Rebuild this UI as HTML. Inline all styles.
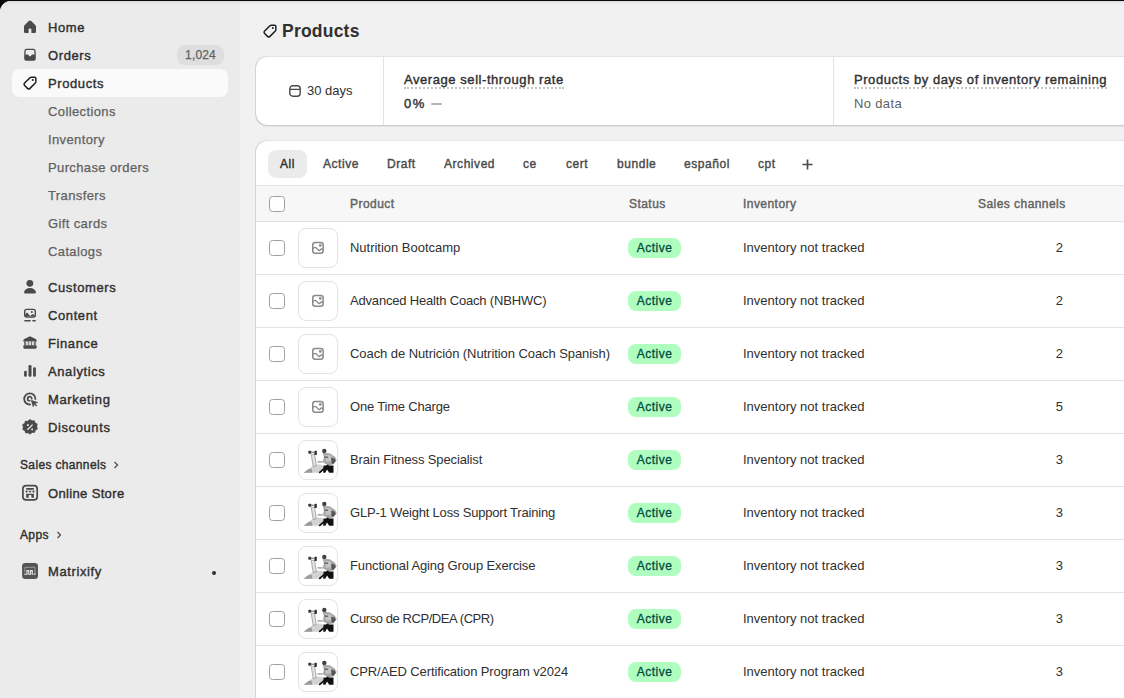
<!DOCTYPE html>
<html><head><meta charset="utf-8">
<style>
*{box-sizing:border-box;margin:0;padding:0}
html,body{width:1124px;height:698px;overflow:hidden;background:#0a0a0a;font-family:"Liberation Sans",sans-serif;color:#303030}
#frame{position:absolute;left:0;top:1px;width:1124px;height:697px;border-top-left-radius:11px;overflow:hidden;background:#ebebeb}
#shade{position:absolute;left:0;top:0;width:1124px;height:8px;background:linear-gradient(to bottom,rgba(0,0,0,.075) 0,rgba(0,0,0,.075) 1px,rgba(0,0,0,.035) 1px,rgba(0,0,0,.035) 2px,rgba(0,0,0,.02) 2px,rgba(0,0,0,.02) 3px,rgba(0,0,0,.012) 3px,rgba(0,0,0,.012) 4px,rgba(0,0,0,.005) 4px,rgba(0,0,0,.005) 5px,rgba(0,0,0,0) 5px);z-index:50}
#side{position:absolute;left:0;top:0;width:240px;height:697px;background:#ebebeb}
#main{position:absolute;left:240px;top:0;width:884px;height:697px;background:#f1f1f1}
.ni{position:absolute;left:12px;width:216px;height:28px;font-size:13px;line-height:28px;font-weight:400;color:#303030;-webkit-text-stroke-width:.4px;letter-spacing:.6px;white-space:nowrap}
.ni .t{position:absolute;left:36px;top:0}
.ni>svg{position:absolute;left:8px;top:3px;width:20px;height:20px}
.ni.sub{color:#616161;-webkit-text-stroke-width:.25px;letter-spacing:.38px}
.ni.sel{background:#fafafa;border-radius:8px;top:68px!important}
.ni.sel .t{top:1px}
.ni.sel>svg{top:4px}
.sec{position:absolute;left:20px;font-size:12px;font-weight:400;-webkit-text-stroke-width:.4px;letter-spacing:.35px;color:#303030;line-height:16px;white-space:nowrap}
.card{position:absolute;background:#fff;border-radius:12px;box-shadow:-1px 0 0 0 rgba(26,26,26,.13),inset 0 -1px 0 0 rgba(26,26,26,.21),inset 0 1px 0 0 rgba(204,204,204,.5),0 1px 0 0 rgba(26,26,26,.07)}
.abs{position:absolute;white-space:nowrap}
.cb{position:absolute;width:16px;height:16px;border-radius:3.5px;border:1px solid #a0a0a0;background:#fff}
.th{position:absolute;left:42px;top:6px;width:40px;height:40px;border-radius:8px;border:1px solid #e3e3e3;background:#fff;overflow:hidden}
.th .ph{position:absolute;left:9px;top:9px;width:20px;height:20px}
.th .tr{position:absolute;left:-1px;top:-1px;width:40px;height:40px}
.row{position:absolute;left:0;width:900px;height:53px;border-top:1px solid #e3e3e3;background:#fff}
.rt{top:16px;line-height:20px;font-size:13px;color:#303030}
.num{left:759px;width:48px;text-align:right}
.badge{position:absolute;left:372px;top:16px;width:53px;height:20px;border-radius:8px;background:#affebf;color:#014b40;font-size:12px;font-weight:400;-webkit-text-stroke-width:.3px;letter-spacing:.5px;line-height:20px;text-align:center}
.tab{position:absolute;top:10px;height:28px;line-height:28px;font-size:12px;font-weight:400;-webkit-text-stroke-width:.4px;letter-spacing:.55px;color:#4a4a4a;white-space:nowrap}
.hd{position:absolute;top:0;line-height:36px;font-size:12px;font-weight:400;-webkit-text-stroke-width:.4px;letter-spacing:.45px;color:#616161;white-space:nowrap}
</style></head>
<body>
<svg width="0" height="0" style="position:absolute"><defs>
<symbol id="phicon" viewBox="0 0 20 20"><rect x="4.75" y="4.45" width="10.4" height="10.7" rx="2.5" fill="none" stroke="#8a8a8a" stroke-width="1.5"/><path d="M4.75 11C5.5 10 6.2 9.4 7 9.4C8 9.4 9.2 10.9 10.3 12.1C10.8 12.6 11.4 12.7 11.9 12.2C12.5 11.6 13 11 13.6 11C14.2 11 14.7 11.4 15.15 11.9" fill="none" stroke="#8a8a8a" stroke-width="1.4"/><circle cx="12.3" cy="7.4" r="1.35" fill="#8a8a8a"/></symbol>
<symbol id="trainer" viewBox="0 0 40 40"><path fill="#d2d2d2" d="M5.7 32.7L12 28L15.5 25.5L19.5 24.5L23.6 24.8L25.9 26.6L22.5 32.7Z"/><path fill="#9a9a9a" d="M5.7 32.7L10.5 29L13.5 28.5L14.5 32.7Z"/><path fill="#e2e2e2" stroke="#8e8e8e" stroke-width=".7" d="M13.2 14.2L16.6 14.4L18.3 25.6L15.2 26.6Z"/><rect x="10.3" y="10.7" width="3" height="3" rx=".8" fill="#3a3a3a"/><rect x="16.4" y="10.8" width="2.4" height="4.1" rx=".6" fill="#2a2a2a"/><rect x="13.2" y="11.7" width="3.4" height="1.1" fill="#777"/><path fill="#a8a8a8" d="M24.5 12.7L31.8 13.2L36.9 16.8L38.7 20L35.5 24.2L30.4 25.6L24.9 22.3L25.9 16.8Z"/><path fill="#c4c4c4" d="M27 15L33 15.5L33.5 21L28 22Z"/><path fill="#3c3c3c" d="M26.3 16.6L30.2 16.8L30 17.8L26.4 17.6Z"/><path fill="#555" d="M33.2 17.8L36.5 18.5L37.8 21L35 24.2L33.6 23Z"/><path fill="#888" d="M19.5 21.3L25 21.6L24.7 22.6L19.6 22.4Z"/><circle cx="26.3" cy="10.9" r="2.2" fill="#404040"/><path fill="#111" d="M25.5 25.6H35.5V32.7H31.2L29 29.4L27.3 32.7H25.2Z"/><path stroke="#111" stroke-width="1.8" stroke-linecap="round" d="M21.8 32.4L29.8 25.4"/></symbol>
</defs></svg>
<div id="frame">
<div id="shade"></div>
<div id="side">
<div class="ni" style="top:13px"><svg viewBox="0 0 20 20"><path fill="#4a4a4a" d="M10 3.6C9.55 3.6 9.1 3.77 8.75 4.1L4.75 7.9C4.27 8.37 4 9 4 9.67V14.4C4 15.34 4.76 16.1 5.7 16.1H8.6V12.5C8.6 11.85 9.2 11.5 10 11.5C10.8 11.5 11.4 11.85 11.4 12.5V16.1H14.3C15.24 16.1 16 15.34 16 14.4V9.67C16 9 15.73 8.37 15.25 7.9L11.25 4.1C10.9 3.77 10.45 3.6 10 3.6Z"/></svg><span class="t">Home</span></div>
<div class="ni" style="top:41px"><svg viewBox="0 0 20 20"><path fill="none" stroke="#4a4a4a" stroke-width="1.3" d="M4.85 9.8L5.1 5.6C5.15 4.9 5.65 4.35 6.35 4.35H13.65C14.35 4.35 14.85 4.9 14.9 5.6L15.15 9.8"/><path fill="#4a4a4a" d="M4.2 9.5H7.6C8 9.5 8.3 9.7 8.5 10L9.2 11C9.6 11.5 10.4 11.5 10.8 11L11.5 10C11.7 9.7 12 9.5 12.4 9.5H15.8V13.8C15.8 14.9 14.9 15.8 13.8 15.8H6.2C5.1 15.8 4.2 14.9 4.2 13.8Z"/></svg><span class="t">Orders</span><span class="abs" style="left:165px;top:3px;width:47px;height:20px;border-radius:8px;background:#dedede;font-size:12px;font-weight:400;color:#616161;-webkit-text-stroke-width:.25px;line-height:20px;text-align:center;letter-spacing:.15px">1,024</span></div>
<div class="ni sel" style="top:69px"><svg viewBox="0 0 20 20"><path fill="none" stroke="#1f1f1f" stroke-width="1.5" stroke-linejoin="round" d="M11.3 4.15H14.6C15.3 4.15 15.85 4.7 15.85 5.4V8.7C15.85 9.2 15.65 9.7 15.3 10.05L10 15.35C9.3 16.05 8.2 16.05 7.5 15.35L4.65 12.5C3.95 11.8 3.95 10.7 4.65 10L9.95 4.7C10.3 4.35 10.8 4.15 11.3 4.15Z"/><circle cx="12.8" cy="7.1" r="1" fill="#1f1f1f"/></svg><span class="t">Products</span></div>
<div class="ni sub" style="top:97px"><span class="t">Collections</span></div>
<div class="ni sub" style="top:125px"><span class="t">Inventory</span></div>
<div class="ni sub" style="top:153px"><span class="t">Purchase orders</span></div>
<div class="ni sub" style="top:181px"><span class="t">Transfers</span></div>
<div class="ni sub" style="top:209px"><span class="t">Gift cards</span></div>
<div class="ni sub" style="top:237px"><span class="t">Catalogs</span></div>
<div class="ni" style="top:273px"><svg viewBox="0 0 20 20"><circle cx="9.85" cy="6.3" r="3.4" fill="#4a4a4a"/><path fill="#4a4a4a" d="M10 11C6.8 11 4.5 12.8 4.05 15C3.95 15.85 4.5 16.6 5.4 16.6H14.6C15.5 16.6 16.05 15.85 15.95 15C15.5 12.8 13.2 11 10 11Z"/></svg><span class="t">Customers</span></div>
<div class="ni" style="top:301px"><svg viewBox="0 0 20 20"><rect x="4.7" y="4.4" width="10.6" height="7.7" rx="2" fill="none" stroke="#4a4a4a" stroke-width="1.4"/><path fill="#4a4a4a" d="M5.2 11.6V9.6C5.8 8.5 6.4 7.7 7 7.7C7.7 7.7 8.4 8.7 9.2 10C9.6 10.7 10.2 10.9 10.7 10.5L12 9.6C12.5 9.3 13.2 9.2 13.8 9.8L14.8 10.8V11.6Z"/><circle cx="11.8" cy="6.9" r="1" fill="#4a4a4a"/><rect x="4.2" y="14.9" width="6.6" height="1.6" rx=".7" fill="#4a4a4a"/><rect x="12.2" y="14.9" width="3.7" height="1.6" rx=".7" fill="#4a4a4a"/></svg><span class="t">Content</span></div>
<div class="ni" style="top:329px"><svg viewBox="0 0 20 20"><path fill="#4a4a4a" d="M10 3.2L4.3 6.1C3.7 6.4 3.3 7 3.3 7.7V8.6H16.7V7.7C16.7 7 16.3 6.4 15.7 6.1Z"/><path fill="#4a4a4a" d="M4.3 8.4H15.7V12.8H4.3Z"/><path fill="#d9d9d9" d="M5.7 8.6H8.3V12.6H5.7ZM8.9 8.6H11.2V12.6H8.9ZM11.9 8.6H14.3V12.6H11.9Z"/><path fill="#4a4a4a" d="M3.3 12.6H16.7V14.3C16.7 15.1 16 15.8 15.2 15.8H4.8C4 15.8 3.3 15.1 3.3 14.3Z"/></svg><span class="t">Finance</span></div>
<div class="ni" style="top:357px"><svg viewBox="0 0 20 20"><rect x="4.1" y="9.7" width="2.7" height="6.1" rx="1.3" fill="#4a4a4a"/><rect x="8.5" y="4" width="3" height="11.8" rx="1.3" fill="#4a4a4a"/><rect x="13.1" y="6.3" width="2.8" height="9.5" rx="1.3" fill="#4a4a4a"/></svg><span class="t">Analytics</span></div>
<div class="ni" style="top:385px"><svg viewBox="0 0 20 20"><path fill="none" stroke="#4a4a4a" stroke-width="1.8" stroke-linecap="round" d="M15.4 9.9A5.6 5.6 0 1 0 10 15.5"/><path fill="none" stroke="#4a4a4a" stroke-width="1.7" stroke-linecap="round" d="M11.75 9.7A2.05 2.05 0 1 0 9.7 11.75"/><path fill="#4a4a4a" stroke="#4a4a4a" stroke-width=".5" stroke-linejoin="round" d="M11.2 11.2L17.8 13.4L15 14.5L17 16.5L16.3 17.2L14.3 15.2L13.2 18Z"/></svg><span class="t">Marketing</span></div>
<div class="ni" style="top:413px"><svg viewBox="0 0 20 20"><path fill="#4a4a4a" stroke="#4a4a4a" stroke-width="1.2" stroke-linejoin="round" d="M10 2.8L11.9 4.2L14.2 3.9L14.9 6.1L17 7.2L16.4 9.5L17.1 11.7L15.1 12.9L14.5 15.2L12.1 15L10 16.8L8.1 15.3L5.8 15.6L5.1 13.4L3 12.3L3.6 10L2.9 7.8L4.9 6.6L5.5 4.3L7.9 4.5Z"/><path fill="#ebebeb" d="M7 7.2H8.7V8.9H7ZM11.3 11.6H13V13.3H11.3ZM12.1 7.2L13 8.1L7.9 13.2L7 12.3Z"/></svg><span class="t">Discounts</span></div>
<div class="sec" style="top:456px">Sales channels <svg style="position:absolute;left:93px;top:4px" width="6" height="8" viewBox="0 0 6 8"><path d="M1.5 1l3 3-3 3" fill="none" stroke="#4a4a4a" stroke-width="1.2"/></svg></div>
<div class="ni" style="top:479px"><svg viewBox="0 0 20 20"><rect x="2.9" y="2.7" width="14.3" height="14.2" rx="3.2" fill="none" stroke="#4a4a4a" stroke-width="1.7"/><rect x="6.2" y="5" width="7.7" height="1.8" rx=".3" fill="#4a4a4a"/><path fill="#4a4a4a" d="M5 7.8H8.2L6.6 10ZM8.5 7.8H11.6L10.05 10ZM11.9 7.8H15.1L13.5 10Z"/><path fill="#4a4a4a" d="M6.2 10.8H13.9V14.7H11.5V13.1C11.5 12.4 10.9 12.1 10.05 12.1S8.6 12.4 8.6 13.1V14.7H6.2Z"/></svg><span class="t" style="letter-spacing:.35px">Online Store</span></div>
<div class="sec" style="top:526px">Apps <svg style="position:absolute;left:36px;top:4px" width="6" height="8" viewBox="0 0 6 8"><path d="M1.5 1l3 3-3 3" fill="none" stroke="#4a4a4a" stroke-width="1.2"/></svg></div>
<div class="ni" style="top:557px"><svg viewBox="0 0 20 20"><rect x="2.1" y="2" width="15.9" height="16" rx="3.2" fill="#555"/><path fill="none" stroke="#9a9a9a" stroke-width="1" d="M4.9 11.5V6.3H15V13"/><path fill="none" stroke="#e6e6e6" stroke-width="1.1" d="M4.2 13.3H7V9.6H8.8V13.3H10.6V9.6H12.3V13.3H13.5"/><rect x="14.2" y="12.4" width="1.4" height="1.4" fill="#e6e6e6"/></svg><span class="t">Matrixify</span><span class="abs" style="left:200px;top:13px;width:4px;height:4px;border-radius:2px;background:#303030"></span></div>
</div>
<div id="main">

  <svg style="position:absolute;left:20px;top:20px;width:20px;height:20px" viewBox="0 0 20 20"><path fill="none" stroke="#1f1f1f" stroke-width="1.5" stroke-linejoin="round" d="M11.3 4.15H14.6C15.3 4.15 15.85 4.7 15.85 5.4V8.7C15.85 9.2 15.65 9.7 15.3 10.05L10 15.35C9.3 16.05 8.2 16.05 7.5 15.35L4.65 12.5C3.95 11.8 3.95 10.7 4.65 10L9.95 4.7C10.3 4.35 10.8 4.15 11.3 4.15Z"/><circle cx="12.8" cy="7.1" r="1" fill="#1f1f1f"/></svg>
  <span class="abs" style="left:42px;top:19px;font-size:17.5px;line-height:22px;font-weight:700;letter-spacing:.22px;color:#303030">Products</span>
  <div class="card" style="left:16px;top:55px;width:900px;height:70px">
    <svg style="position:absolute;left:33px;top:29px;width:12px;height:12px" viewBox="0 0 12 12"><rect x=".8" y=".8" width="10.4" height="10.4" rx="3" fill="none" stroke="#4a4a4a" stroke-width="1.4"/><path d="M.8 4.3h10.4" stroke="#4a4a4a" stroke-width="1.3"/></svg>
    <span class="abs" style="left:51px;top:25px;font-size:13px;line-height:20px;color:#303030">30 days</span>
    <div style="position:absolute;left:127px;top:0;width:1px;height:69px;background:#e3e3e3"></div>
    <span class="abs" style="left:148px;top:14px;font-size:13px;line-height:20px;font-weight:400;-webkit-text-stroke-width:.4px;letter-spacing:.56px;color:#303030;border-bottom:2px dotted #c4c4c4;height:19px">Average sell-through rate</span>
    <span class="abs" style="left:148px;top:38px;font-size:13px;line-height:20px;font-weight:400;-webkit-text-stroke-width:.4px;letter-spacing:1.4px;color:#303030">0%</span>
    <div style="position:absolute;left:175px;top:46.5px;width:11px;height:2px;background:#b5b5b5;border-radius:1px"></div>
    <div style="position:absolute;left:577px;top:0;width:1px;height:69px;background:#e3e3e3"></div>
    <span class="abs" style="left:598px;top:14px;font-size:13px;line-height:20px;font-weight:400;-webkit-text-stroke-width:.4px;letter-spacing:.56px;color:#303030;border-bottom:2px dotted #c4c4c4;height:19px">Products by days of inventory remaining</span>
    <span class="abs" style="left:598px;top:38px;font-size:13px;line-height:20px;letter-spacing:.35px;color:#616161">No data</span>
  </div>
  <div class="card" style="left:16px;top:139px;width:900px;height:620px;overflow:hidden">
    <span class="tab" style="left:12px;width:39px;background:#ebebeb;border-radius:8px;color:#303030;text-align:center">All</span>
    <span class="tab" style="left:67px">Active</span>
    <span class="tab" style="left:131px">Draft</span>
    <span class="tab" style="left:188px">Archived</span>
    <span class="tab" style="left:267px">ce</span>
    <span class="tab" style="left:310px">cert</span>
    <span class="tab" style="left:361px">bundle</span>
    <span class="tab" style="left:428px">español</span>
    <span class="tab" style="left:502px">cpt</span>
    <svg style="position:absolute;left:546px;top:18.5px;width:11px;height:11px" viewBox="0 0 11 11"><path d="M5.5 .4v10.2M.4 5.5h10.2" stroke="#4a4a4a" stroke-width="1.7"/></svg>
    <div style="position:absolute;left:0;top:45px;width:900px;height:36px;background:#f7f7f7;border-top:1px solid #e3e3e3">
      <span class="cb" style="left:13px;top:10px"></span>
      <span class="hd" style="left:94px">Product</span>
      <span class="hd" style="left:373px">Status</span>
      <span class="hd" style="left:487px">Inventory</span>
      <span class="hd" style="left:722px;width:86px;text-align:right">Sales channels</span>
    </div>
<div class="row" style="top:81px"><span class="cb" style="left:13px;top:18px"></span><span class="th"><svg class="ph" viewBox="0 0 20 20"><use href="#phicon"/></svg></span><span class="abs rt" style="left:94px;letter-spacing:-0.02px">Nutrition Bootcamp</span><span class="badge">Active</span><span class="abs rt" style="left:487px">Inventory not tracked</span><span class="abs rt num">2</span></div>
<div class="row" style="top:134px"><span class="cb" style="left:13px;top:18px"></span><span class="th"><svg class="ph" viewBox="0 0 20 20"><use href="#phicon"/></svg></span><span class="abs rt" style="left:94px;letter-spacing:-0.18px">Advanced Health Coach (NBHWC)</span><span class="badge">Active</span><span class="abs rt" style="left:487px">Inventory not tracked</span><span class="abs rt num">2</span></div>
<div class="row" style="top:187px"><span class="cb" style="left:13px;top:18px"></span><span class="th"><svg class="ph" viewBox="0 0 20 20"><use href="#phicon"/></svg></span><span class="abs rt" style="left:94px;letter-spacing:-0.07px">Coach de Nutrición (Nutrition Coach Spanish)</span><span class="badge">Active</span><span class="abs rt" style="left:487px">Inventory not tracked</span><span class="abs rt num">2</span></div>
<div class="row" style="top:240px"><span class="cb" style="left:13px;top:18px"></span><span class="th"><svg class="ph" viewBox="0 0 20 20"><use href="#phicon"/></svg></span><span class="abs rt" style="left:94px;letter-spacing:-0.19px">One Time Charge</span><span class="badge">Active</span><span class="abs rt" style="left:487px">Inventory not tracked</span><span class="abs rt num">5</span></div>
<div class="row" style="top:293px"><span class="cb" style="left:13px;top:18px"></span><span class="th"><svg class="tr" viewBox="0 0 40 40"><use href="#trainer"/></svg></span><span class="abs rt" style="left:94px;letter-spacing:-0.12px">Brain Fitness Specialist</span><span class="badge">Active</span><span class="abs rt" style="left:487px">Inventory not tracked</span><span class="abs rt num">3</span></div>
<div class="row" style="top:346px"><span class="cb" style="left:13px;top:18px"></span><span class="th"><svg class="tr" viewBox="0 0 40 40"><use href="#trainer"/></svg></span><span class="abs rt" style="left:94px;letter-spacing:-0.19px">GLP-1 Weight Loss Support Training</span><span class="badge">Active</span><span class="abs rt" style="left:487px">Inventory not tracked</span><span class="abs rt num">3</span></div>
<div class="row" style="top:399px"><span class="cb" style="left:13px;top:18px"></span><span class="th"><svg class="tr" viewBox="0 0 40 40"><use href="#trainer"/></svg></span><span class="abs rt" style="left:94px;letter-spacing:-0.13px">Functional Aging Group Exercise</span><span class="badge">Active</span><span class="abs rt" style="left:487px">Inventory not tracked</span><span class="abs rt num">3</span></div>
<div class="row" style="top:452px"><span class="cb" style="left:13px;top:18px"></span><span class="th"><svg class="tr" viewBox="0 0 40 40"><use href="#trainer"/></svg></span><span class="abs rt" style="left:94px;letter-spacing:-0.43px">Curso de RCP/DEA (CPR)</span><span class="badge">Active</span><span class="abs rt" style="left:487px">Inventory not tracked</span><span class="abs rt num">3</span></div>
<div class="row" style="top:505px"><span class="cb" style="left:13px;top:18px"></span><span class="th"><svg class="tr" viewBox="0 0 40 40"><use href="#trainer"/></svg></span><span class="abs rt" style="left:94px;letter-spacing:-0.13px">CPR/AED Certification Program v2024</span><span class="badge">Active</span><span class="abs rt" style="left:487px">Inventory not tracked</span><span class="abs rt num">3</span></div>
  </div>

</div>
</div>
</body></html>
